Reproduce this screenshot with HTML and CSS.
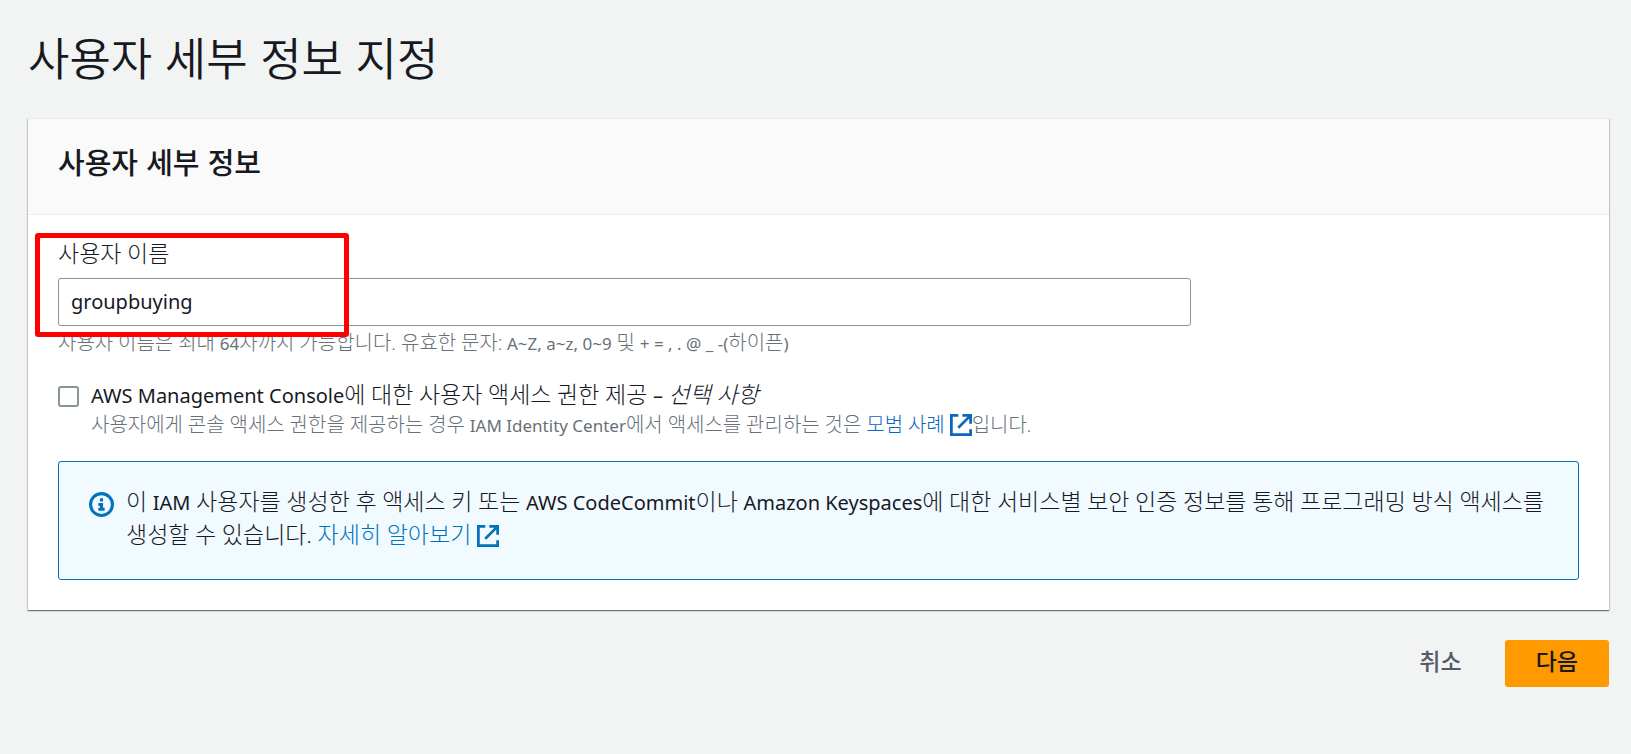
FILE: index.html
```html
<!DOCTYPE html>
<html lang="ko">
<head>
<meta charset="utf-8">
<title>사용자 세부 정보 지정</title>
<link rel="stylesheet" href="styles.css">
</head>
<body>
<main class="page">
  <h1 class="page-title">사용자 세부 정보 지정</h1>
  <form class="form">
    <section class="panel">
      <header class="panel-header">
        <h2 class="panel-title">사용자 세부 정보</h2>
      </header>
      <div class="panel-body">
        <div class="field">
          <label class="field-label" for="username">사용자 이름</label>
          <input class="text-input" id="username" type="text" value="groupbuying" aria-describedby="username-hint">
          <p class="hint" id="username-hint">사용자 이름은 최대 <span class="latin">64</span>자까지 가능합니다. 유효한 문자: <span class="latin">A~Z, a~z, 0~9</span> 및 <span class="latin">+ = , . @ _ -(</span>하이픈<span class="latin">)</span></p>
          <div class="highlight"></div>
        </div>
        <div class="check-row">
          <input class="checkbox" id="console" type="checkbox" aria-describedby="console-hint">
          <div class="check-text">
            <label class="check-label" for="console"><span class="latin">AWS Management Console</span>에 대한 사용자 액세스 권한 제공 <span class="latin">–</span> <em>선택 사항</em></label>
            <p class="hint" id="console-hint">사용자에게 콘솔 액세스 권한을 제공하는 경우 <span class="latin">IAM Identity Center</span>에서 액세스를 관리하는 것은 <a class="link-strong" href="#">모범 사례 <svg class="external" viewBox="0 0 16 16" aria-hidden="true"><path d="M6 1H1v14h14v-4M9 1h6v6M15 1L6 10"/></svg></a>입니다.</p>
          </div>
        </div>
        <div class="alert">
          <svg class="info" viewBox="0 0 16 16" aria-hidden="true"><circle cx="8" cy="8" r="7"/><path d="M8 11V8H6M10 11H6M8 6V4"/></svg>
          <p class="alert-text">이 <span class="latin">IAM</span> 사용자를 생성한 후 액세스 키 또는 <span class="latin">AWS CodeCommit</span>이나 <span class="latin">Amazon Keyspaces</span>에 대한 서비스별 보안 인증 정보를 통해 프로그래밍 방식 액세스를 생성할 수 있습니다. <a class="link" href="#">자세히 알아보기 <svg class="external" viewBox="0 0 16 16" aria-hidden="true"><path d="M6 1H1v14h14v-4M9 1h6v6M15 1L6 10"/></svg></a></p>
        </div>
      </div>
    </section>
    <div class="actions">
      <button class="button" type="button">취소</button>
      <button class="button button-primary" type="button">다음</button>
    </div>
  </form>
</main>
</body>
</html>
```
FILE: styles.css
```css
* { box-sizing: border-box; }

body {
  margin: 0;
  background: #f2f3f3;
  color: #16191f;
  font-family: Roboto, "Noto Sans CJK KR", sans-serif;
  font-size: 23px;
  font-weight: 300;
  line-height: 33px;
}

h1, h2, p { margin: 0; }

.page { padding: 28px 22px 60px 28px; }

.page-title,
.panel-title { font-family: "Noto Sans CJK KR", sans-serif; }

.page-title {
  font-size: 45px;
  font-weight: 350;
  line-height: 58px;
}

.panel {
  margin-top: 32px;
  background: #fff;
  border-top: 1px solid #eaeded;
  box-shadow: 0 1px 1px 0 rgba(0, 28, 36, .4), 1px 1px 1px 0 rgba(0, 28, 36, .15), -1px 1px 1px 0 rgba(0, 28, 36, .15);
}

.panel-header {
  padding: 24px 30px 35px;
  background: #fafafa;
  border-bottom: 1px solid #eaeded;
}

.panel-title {
  font-size: 29px;
  font-weight: 500;
  line-height: 36px;
}

.panel-body { padding: 24px 30px 30px; }

.field {
  position: relative;
  display: flex;
  flex-direction: column;
}

.field-label { line-height: 32px; }

.text-input {
  width: calc(75% - 8px);
  height: 48px;
  margin-top: 7px;
  padding: 0 12px 1px;
  border: 1px solid #879596;
  border-radius: 3px;
  background: #fff;
  color: #16191f;
  font: 400 20px "Noto Sans", sans-serif;
}

.hint {
  color: #687078;
  font-size: 20px;
  line-height: 24px;
}

.field .hint { margin-top: 5px; }

.latin {
  font-family: "Noto Sans", sans-serif;
  font-size: 20px;
  font-weight: 400;
  line-height: 1;
}

.hint .latin { font-size: 17px; }

.highlight {
  position: absolute;
  top: -6px;
  left: -23px;
  width: 314px;
  height: 104px;
  border: 5px solid #f00;
  border-radius: 3px;
  pointer-events: none;
}

.check-row {
  display: flex;
  gap: 12px;
  margin-top: 26px;
}

.checkbox {
  appearance: none;
  flex: none;
  width: 21px;
  height: 21px;
  margin: 5px 0 0;
  border: 2px solid #879596;
  border-radius: 3px;
  background: #fff;
}

.check-label {
  display: block;
  margin-bottom: 2px;
  line-height: 30px;
}

a { text-decoration: none; }

.link { color: #0073bb; }
.link-strong { color: #0a66c2; }

.external {
  width: 22px;
  height: 22px;
  vertical-align: -4px;
  fill: none;
  stroke: currentColor;
  stroke-width: 2;
}

.alert {
  display: flex;
  gap: 12px;
  margin-top: 24px;
  padding: 24px 30px 27px;
  border: 1px solid #0073bb;
  border-radius: 3px;
  background: #f1faff;
}

.info {
  flex: none;
  width: 25px;
  height: 25px;
  margin-top: 6px;
  fill: none;
  stroke: #0073bb;
  stroke-width: 2;
}

.actions {
  display: flex;
  justify-content: flex-end;
  gap: 12px;
  margin-top: 30px;
}

.button {
  height: 47px;
  padding: 0 31px 2px;
  border: 0;
  border-radius: 3px;
  background: none;
  color: #545b64;
  font: 500 23px/30px Roboto, "Noto Sans CJK KR", sans-serif;
}

.button-primary {
  background: #ff9900;
  color: #16191f;
}
```
